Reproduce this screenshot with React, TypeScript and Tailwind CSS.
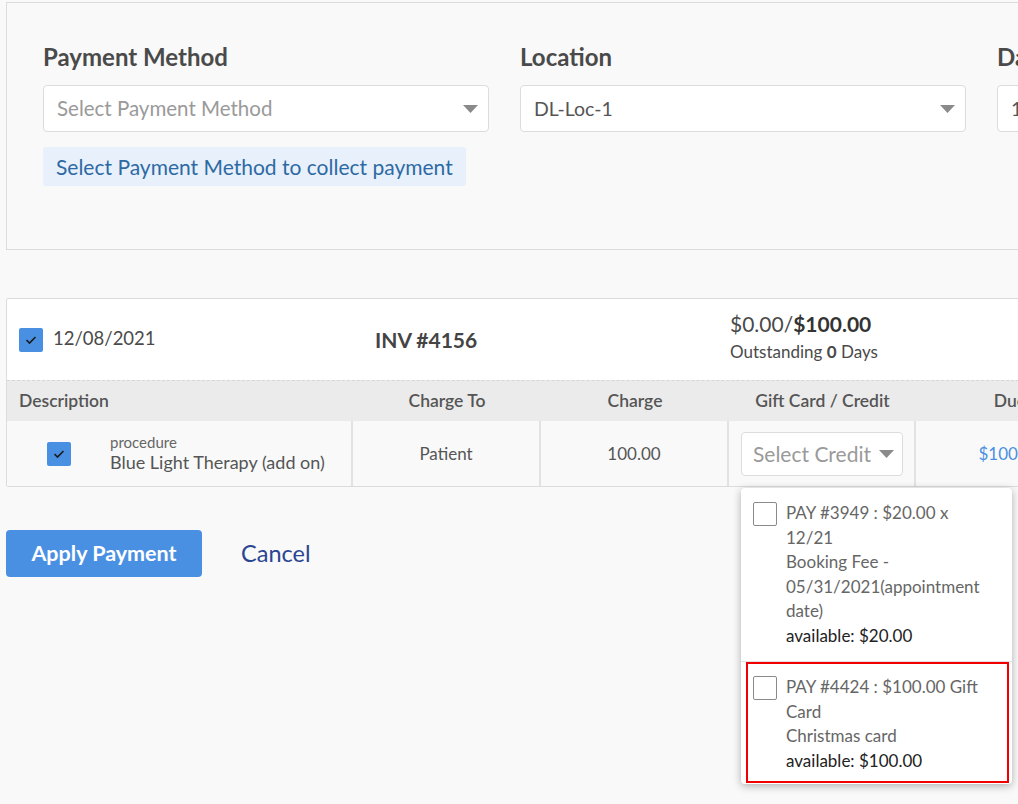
import React from "react";

function Caret({ className = "" }: { className?: string }) {
  return (
    <svg width="15" height="8" viewBox="0 0 15 8" className={className}>
      <polygon points="0,0 15,0 7.5,8" fill="#8a8a8a" />
    </svg>
  );
}

function BlueCheck() {
  return (
    <span className="flex h-[24px] w-[24px] shrink-0 items-center justify-center rounded-[2px] bg-[#4a90e2]">
      <svg width="12" height="10" viewBox="0 0 12 10">
        <polyline points="1.5,5 4.5,8 10.5,2" fill="none" stroke="#1a1a1a" strokeWidth="1.6" />
      </svg>
    </span>
  );
}

function EmptyCheck() {
  return <span className="mt-[1px] h-[24px] w-[24px] shrink-0 rounded-[2px] border border-[#8a8a8a] bg-white" />;
}

function Field({ label, value, placeholder }: { label: string; value: string; placeholder?: boolean }) {
  return (
    <div className="w-[446px] shrink-0">
      <div className="h-[26px] text-[24px] font-bold leading-[26px] text-[#4a4a4a]">{label}</div>
      <div className="mt-[15px] flex h-[47px] items-center justify-between rounded-[4px] border border-[#dcdcdc] bg-white pl-[13px] pr-[10px]">
        <span className={placeholder ? "text-[20.5px] text-[#9a9a9a]" : "text-[19.5px] text-[#555]"}>{value}</span>
        <Caret />
      </div>
    </div>
  );
}

export default function App() {
  return (
    <div className="min-h-screen w-full overflow-hidden bg-[#f9f9f9] font-['Lato',sans-serif] text-[#555]">
      <div className="w-[1200px] pl-[6px] pt-[2px]">
        {/* Payment form */}
        <section className="h-[248px] border border-[#dcdcdc] pl-[36px] pt-[41px]">
          <div className="flex gap-[31px]">
            <div className="w-[446px] shrink-0">
              <Field label="Payment Method" value="Select Payment Method" placeholder />
              <div className="mt-[15px] inline-flex h-[39px] items-center rounded-[3px] bg-[#e8f0fb] px-[13px] text-[21px] text-[#2d6aa3]">
                Select Payment Method to collect payment
              </div>
            </div>
            <Field label="Location" value="DL-Loc-1" />
            <Field label="Date Paid" value="12/08/2021" />
          </div>
        </section>

        {/* Invoice */}
        <div className="relative mt-[48px]">
          <div className="overflow-hidden rounded-[2px] border border-[#dcdcdc] bg-white">
            <div className="flex h-[81px] items-center pl-[12px]">
              <div className="flex w-[356px] items-center gap-[10px]">
                <BlueCheck />
                <span className="-mt-[1px] text-[18.5px] text-[#4a4a4a]">12/08/2021</span>
              </div>
              <div className="w-[355px] text-[21px] font-bold text-[#444]">INV #4156</div>
              <div className="-mt-[5px]">
                <div className="text-[21px] leading-[26px] text-[#4a4a4a]">
                  $0.00/<span className="font-bold text-[#333]">$100.00</span>
                </div>
                <div className="mt-[4px] text-[17px] leading-[22px] text-[#4a4a4a]">
                  Outstanding <span className="font-bold">0</span> Days
                </div>
              </div>
            </div>

            <div className="grid h-[41px] grid-cols-[346px_188px_188px_187px_188px] items-center border-t border-dashed border-[#d6d6d6] bg-[#ebebeb] text-[17.5px] font-semibold text-[#555]">
              <div className="pl-[12px]">Description</div>
              <div className="text-center">Charge To</div>
              <div className="text-center">Charge</div>
              <div className="text-center">Gift Card / Credit</div>
              <div className="text-center">Due</div>
            </div>

            <div className="grid h-[65px] grid-cols-[346px_188px_188px_187px_188px] bg-[#f9f9f9] text-[17px] text-[#555]">
              <div className="flex items-center border-r-2 border-[#e2e2e2] pl-[40px]">
                <BlueCheck />
                <div className="ml-[39px]">
                  <div className="text-[15px] leading-[17px] text-[#666]">procedure</div>
                  <div className="text-[18px] leading-[23px]">Blue Light Therapy (add on)</div>
                </div>
              </div>
              <div className="flex items-center justify-center border-r-2 border-[#e2e2e2]">Patient</div>
              <div className="flex items-center justify-center border-r-2 border-[#e2e2e2]">100.00</div>
              <div className="flex items-center border-r-2 border-[#e2e2e2] pl-[12px]">
                <div className="flex h-[44px] w-[162px] items-center justify-between rounded-[4px] border border-[#dcdcdc] bg-white pl-[11px] pr-[8px]">
                  <span className="whitespace-nowrap text-[21px] text-[#9a9a9a]">Select Credit</span>
                  <Caret />
                </div>
              </div>
              <div className="flex items-center justify-center text-[#4a90e2]">$100.00</div>
            </div>
          </div>

          {/* Credit dropdown */}
          <div className="absolute left-[735px] top-[190px] z-10 w-[271px] rounded-[4px] bg-white pb-[1px] shadow-[0_2px_8px_rgba(0,0,0,0.3)]">
            <div className="flex gap-[9px] px-[12px] pb-[13px] pt-[13px] text-[17px] leading-[24.5px]">
              <EmptyCheck />
              <div>
                <div className="text-[#666]">PAY #3949 : $20.00 x</div>
                <div className="text-[#666]">12/21</div>
                <div className="text-[#666]">Booking Fee -</div>
                <div className="text-[#666]">05/31/2021(appointment</div>
                <div className="text-[#666]">date)</div>
                <div className="text-[#222]">available: $20.00</div>
              </div>
            </div>
            <div className="border-t border-[#e2e2e2]">
              <div className="ml-[5px] mr-[3px] flex gap-[9px] border-2 border-[#f00000] pb-[8px] pl-[5px] pt-[11px] text-[17px] leading-[24.5px]">
                <EmptyCheck />
                <div>
                  <div className="text-[#666]">PAY #4424 : $100.00 Gift</div>
                  <div className="text-[#666]">Card</div>
                  <div className="text-[#666]">Christmas card</div>
                  <div className="text-[#222]">available: $100.00</div>
                </div>
              </div>
            </div>
          </div>
        </div>

        {/* Actions */}
        <div className="mt-[43px] flex items-center gap-[39px]">
          <button className="h-[47px] w-[196px] rounded-[4px] bg-[#4a90e2] text-[21.5px] font-bold text-white">
            Apply Payment
          </button>
          <button className="text-[23.5px] text-[#2a4592]">Cancel</button>
        </div>
      </div>
    </div>
  );
}
